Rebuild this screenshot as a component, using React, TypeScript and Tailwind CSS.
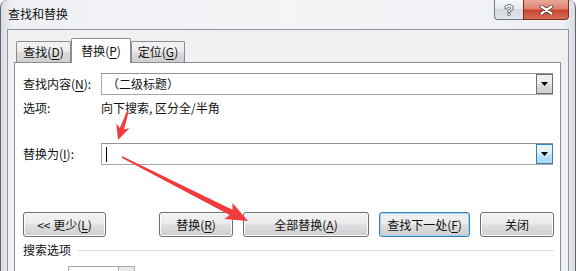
import type { ReactNode } from "react";

type Pt = [number, number];

function arrow(from: Pt, to: Pt, head: number, half: number, s0: number, s1: number) {
  const [x1, y1] = from;
  const [x2, y2] = to;
  const len = Math.hypot(x2 - x1, y2 - y1);
  const dx = (x2 - x1) / len;
  const dy = (y2 - y1) / len;
  const nx = -dy;
  const ny = dx;
  const bx = x2 - dx * head;
  const by = y2 - dy * head;
  const jx = bx + dx * 3;
  const jy = by + dy * 3;
  const pts: Pt[] = [
    [x1 + nx * s0, y1 + ny * s0],
    [jx + nx * s1, jy + ny * s1],
    [bx + nx * half, by + ny * half],
    [x2, y2],
    [bx - nx * half, by - ny * half],
    [jx - nx * s1, jy - ny * s1],
    [x1 - nx * s0, y1 - ny * s0],
  ];
  return pts.map((p) => p.map((v) => v.toFixed(1)).join(",")).join(" ");
}

function Caret() {
  return (
    <svg width="7" height="4" viewBox="0 0 7 4">
      <polygon points="0,0 7,0 3.5,4" fill="#000" />
    </svg>
  );
}

function Combo({ text, focused, cursor }: { text?: string; focused?: boolean; cursor?: boolean }) {
  return (
    <div className="flex h-[22px] w-[452px] items-center border border-[#a5a7ad] border-t-[#8f9297] bg-white">
      <div className="flex flex-1 items-center pl-[5px] text-[12px] leading-none">
        {text}
        {cursor && <div className="ml-[-1px] h-[15px] w-px bg-black" />}
      </div>
      {focused ? (
        <div className="-mr-px flex h-[20px] w-[17px] items-center justify-center border border-[#3c7fb1] bg-[linear-gradient(#eaf6fd,#d9f0fc_50%,#bee6fd_50%,#a7d9f5)]">
          <Caret />
        </div>
      ) : (
        <div className="-mr-px flex h-[20px] w-[17px] items-center justify-center border border-[#707070] bg-[linear-gradient(#f2f2f2,#ebebeb_50%,#dddddd_50%,#cfcfcf)]">
          <Caret />
        </div>
      )}
    </div>
  );
}

function Btn({ className, focused, children }: { className: string; focused?: boolean; children: ReactNode }) {
  return (
    <div
      className={`flex h-[25px] items-center justify-center rounded-[3px] border text-[12px] leading-none bg-[linear-gradient(#f2f2f2,#ebebeb_45%,#dddddd_55%,#cfcfcf)] ${
        focused ? "border-[#3c7fb1] shadow-[inset_0_0_0_1px_#9fd3f3]" : "border-[#707070] shadow-[inset_0_0_0_1px_#fbfbfb]"
      } ${className}`}
    >
      {children}
    </div>
  );
}

function Tab({ label, k, active, className }: { label: string; k: string; active?: boolean; className: string }) {
  return active ? (
    <div className={`relative z-10 flex h-[25px] items-center justify-center rounded-t-[2px] border border-b-0 border-[#898c95] bg-white text-[12px] ${className}`}>
      {label}(<u className="underline-offset-2">{k}</u>)
    </div>
  ) : (
    <div className={`mt-[3px] flex h-[21px] items-center justify-center rounded-t-[2px] border border-b-0 border-[#898c95] bg-[linear-gradient(#f3f3f3,#ebebeb_50%,#dddddd_50%,#cfcfcf)] text-[12px] ${className}`}>
      {label}(<u className="underline-offset-2">{k}</u>)
    </div>
  );
}

export default function App() {
  return (
    <div className="relative h-[271px] w-[577px] overflow-hidden bg-white font-['Noto_Sans_CJK_SC',sans-serif] text-[#111]">
      <div className="flex h-full w-[576px] flex-col rounded-t-[7px] border-x border-[#5f6670] bg-[linear-gradient(90deg,#d8dbe0,#eef0f3_2%,#f4f5f7_50%,#eef0f3_98%,#d8dbe0)]">
        {/* title bar */}
        <div className="flex h-[29px] shrink-0 items-start">
          <div className="pl-[7px] pt-[6px] text-[12px] leading-[16px]">查找和替换</div>
          <div className="ml-auto mr-[6px] flex">
            <div className="flex h-[20px] w-[29px] items-center justify-center rounded-bl-[4px] border border-t-0 border-r-0 border-[#6e7886] bg-[linear-gradient(#f6f7f9,#e6e9ed_50%,#d5d9df_50%,#e2e5e9)]">
              <svg width="10" height="12" viewBox="0 0 10 12">
                <path d="M2 4 C2 1 8 1 8 4 C8 6 5 6 5 8" fill="none" stroke="#5a6270" strokeWidth="3.2" strokeLinecap="round" />
                <path d="M2 4 C2 1 8 1 8 4 C8 6 5 6 5 8" fill="none" stroke="#fff" strokeWidth="1.4" strokeLinecap="round" />
                <circle cx="5" cy="10.6" r="1.4" fill="#fff" stroke="#5a6270" strokeWidth="0.9" />
              </svg>
            </div>
            <div className="flex h-[20px] w-[46px] items-center justify-center rounded-br-[4px] border border-t-0 border-[#7a2d22] bg-[linear-gradient(#eaaa9b,#dd8371_45%,#c8442e_55%,#d8705b)]">
              <svg width="15" height="10" viewBox="0 0 15 10">
                <path d="M2.5 1.5 L12.5 8.5 M12.5 1.5 L2.5 8.5" stroke="#4a2a24" strokeWidth="3.8" strokeLinecap="round" />
                <path d="M2.5 1.5 L12.5 8.5 M12.5 1.5 L2.5 8.5" stroke="#fff" strokeWidth="2.2" strokeLinecap="round" />
              </svg>
            </div>
          </div>
        </div>

        {/* client area */}
        <div className="ml-[6px] mr-[6px] min-h-0 flex-1 border border-b-0 border-[#8e959e] bg-[#f0f0f0]">
          <div className="flex pl-[8px] pt-[8px]">
            <Tab label="查找" k="D" className="w-[55px]" />
            <Tab label="替换" k="P" active className="w-[60px]" />
            <Tab label="定位" k="G" className="w-[54px]" />
          </div>
          <div className="-mt-px ml-[6px] h-[220px] w-[547px] border border-[#898c95] bg-white pl-[8px] pr-[6px] pt-[10px]">
            <div className="flex items-center">
              <div className="w-[78px] text-[12px]">
                查找内容(<u className="underline-offset-2">N</u>):
              </div>
              <Combo text="（二级标题）" />
            </div>
            <div className="mt-[5px] flex h-[16px] items-center text-[12px]">
              <div className="w-[78px]">选项:</div>
              <div>向下搜索, 区分全/半角</div>
            </div>
            <div className="mt-[27px] flex items-center">
              <div className="w-[78px] text-[12px]">
                替换为(<u className="underline-offset-2">I</u>):
              </div>
              <Combo focused cursor />
            </div>
            <div className="mt-[47px] flex">
              <Btn className="w-[83px]">
                &lt;&lt; 更少(<u className="underline-offset-2">L</u>)
              </Btn>
              <Btn className="ml-[53px] w-[74px]">
                替换(<u className="underline-offset-2">R</u>)
              </Btn>
              <Btn className="ml-[10px] w-[126px]">
                全部替换(<u className="underline-offset-2">A</u>)
              </Btn>
              <Btn focused className="ml-[10px] w-[91px]">
                查找下一处(<u className="underline-offset-2">F</u>)
              </Btn>
              <Btn className="ml-[10px] w-[74px]">关闭</Btn>
            </div>
            <div className="mt-[5px] flex h-[16px] items-center text-[12px]">
              <div>搜索选项</div>
              <div className="ml-[6px] h-px flex-1 bg-[#d5dfe5]" />
            </div>
            <div className="ml-[45px] mt-[8px] flex h-[20px] w-[67px] border border-[#a5a7ad]">
              <div className="flex-1" />
              <div className="w-[16px] border-l border-[#a5a7ad] bg-[#e8e8e8]" />
            </div>
          </div>
        </div>
      </div>

      <svg className="pointer-events-none absolute inset-0" width="577" height="271">
        <polygon points={arrow([128, 111], [118, 140], 15, 7, 0.8, 2.2)} fill="#f23b3b" />
        <polygon points={arrow([122, 157], [248, 221], 22, 9, 0.8, 3)} fill="#f23b3b" />
      </svg>
    </div>
  );
}
